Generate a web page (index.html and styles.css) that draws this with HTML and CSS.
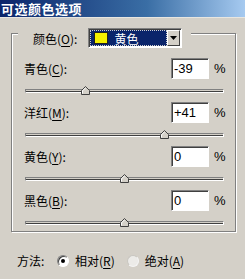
FILE: index.html
```html
<!DOCTYPE html>
<html lang="zh">
<head>
    <meta charset="UTF-8">
    <title>可选颜色选项</title>
    <link rel="stylesheet" href="styles.css">
</head>
<body>

    <div class="titlebar">可选颜色选项</div>

    <div class="group">
        <div class="legend">
            <span>颜色(<u>O</u>):</span>
            <div class="select">
                <div class="select-value">
                    <span class="swatch"></span>
                    <span>黄色</span>
                </div>
                <div class="select-btn">
                    <svg width="7" height="4" viewBox="0 0 7 4"><path d="M0 0h7L3.5 4z" fill="#000"/></svg>
                </div>
            </div>
        </div>

        <div class="row first">
            <span class="label">青色(<u>C</u>):</span>
            <input class="num" type="text" value="-39">
            <span class="pct">%</span>
        </div>
        <div class="track"><span class="thumb" style="left: 30.5%"></span></div>

        <div class="row">
            <span class="label">洋红(<u>M</u>):</span>
            <input class="num" type="text" value="+41">
            <span class="pct">%</span>
        </div>
        <div class="track"><span class="thumb" style="left: 70.5%"></span></div>

        <div class="row">
            <span class="label">黄色(<u>Y</u>):</span>
            <input class="num" type="text" value="0">
            <span class="pct">%</span>
        </div>
        <div class="track"><span class="thumb" style="left: 50%"></span></div>

        <div class="row">
            <span class="label">黑色(<u>B</u>):</span>
            <input class="num" type="text" value="0">
            <span class="pct">%</span>
        </div>
        <div class="track"><span class="thumb" style="left: 50%"></span></div>
    </div>

    <div class="method">
        <span class="method-label">方法:</span>
        <label class="radio"><span class="dot checked"></span>相对(<u>R</u>)</label>
        <label class="radio"><span class="dot off"></span>绝对(<u>A</u>)</label>
    </div>

</body>
</html>
```

FILE: styles.css
```css
body {
    margin: 0;
    width: 245px;
    height: 279px;
    overflow: hidden;
    background-color: #d4d0c8;
    font-family: "Noto Sans CJK SC", "Noto Sans", sans-serif;
    font-size: 12px;
    color: #000;
}
u {
    text-decoration-thickness: 1px;
    text-underline-offset: 2px;
}
.titlebar {
    height: 17px;
    line-height: 17px;
    padding-left: 1px;
    background: linear-gradient(to right, #0a246a 0%, #3a6ea5 60%, #a6caf0 100%);
    color: #fff;
    font-weight: bold;
    font-size: 13px;
    letter-spacing: 0.5px;
    border-bottom: 1px solid #e8e6e0;
}
.group {
    margin: 15px 9px 0 11px;
    padding-bottom: 6px;
    border: 1px solid #808080;
    box-shadow: 1px 1px 0 #fff, inset 1px 1px 0 #fff;
}
.legend {
    display: flex;
    align-items: center;
    gap: 11px;
    width: fit-content;
    margin: -6px 0 0 6px;
    padding: 0 9px 0 15px;
    background-color: #d4d0c8;
    height: 20px;
}
.select {
    display: flex;
    width: 90px;
    height: 16px;
    padding: 1px;
    border: 1px solid;
    border-color: #808080 #fff #fff #808080;
    box-shadow: inset 1px 1px 0 #404040;
    background-color: #fff;
}
.select-value {
    flex: 1;
    display: flex;
    align-items: center;
    gap: 6px;
    padding-left: 4px;
    background-color: #0a246a;
    color: #fff;
    outline: 1px dotted #d0d0d0;
    outline-offset: -1px;
}
.swatch {
    width: 12px;
    height: 10px;
    background-color: #f4f000;
    border: 1px solid #202020;
}
.select-btn {
    width: 13px;
    display: flex;
    align-items: center;
    justify-content: center;
    background-color: #d4d0c8;
    border: 1px solid;
    border-color: #fff #404040 #404040 #fff;
    box-sizing: border-box;
}
.row {
    display: flex;
    align-items: center;
    height: 21px;
    margin-left: 12px;
}
.row.first {
    margin-top: 10px;
}
.label {
    flex: 1;
}
.num {
    width: 38px;
    height: 21px;
    box-sizing: border-box;
    padding: 0 2px;
    margin: 0;
    border: 1px solid;
    border-color: #808080 #fff #fff #808080;
    box-shadow: inset 1px 1px 0 #404040;
    background-color: #fff;
    font-family: "Liberation Sans", Arial, sans-serif;
    font-size: 13px;
    color: #000;
}
.pct {
    width: 14px;
    margin-left: 5px;
    margin-right: 7px;
    font-family: "Liberation Sans", Arial, sans-serif;
    font-size: 13px;
}
.track {
    position: relative;
    height: 2px;
    margin: 10px 11px 9px 13px;
    border: 1px solid;
    border-color: #808080 #fff #fff #808080;
    background-color: #404040;
    box-shadow: 0 1px 0 #d4d0c8 inset;
}
.track:last-child {
    margin-bottom: 0;
}
.thumb {
    position: absolute;
    top: -4px;
    width: 9px;
    height: 9px;
    margin-left: -5px;
    background: url("data:image/svg+xml;utf8,<svg xmlns='http://www.w3.org/2000/svg' width='9' height='9'><path d='M0.5 8.5V4.5L4.5 0.5L8.5 4.5V8.5Z' fill='%23d4d0c8' stroke='%23404040'/><path d='M1.5 7.5V4.9L4.5 1.9' fill='none' stroke='%23fff'/></svg>");
}
.method {
    display: flex;
    align-items: center;
    margin: 20px 0 0 17px;
}
.method-label {
    width: 30px;
    margin-right: 10px;
}
.radio {
    display: flex;
    align-items: center;
    margin-right: 12px;
}
.dot {
    width: 10px;
    height: 10px;
    border-radius: 50%;
    margin-right: 6px;
    border: 1px solid;
    border-color: #808080 #fff #fff #808080;
    box-shadow: inset 1px 1px 0 #404040;
    background-color: #fff;
    position: relative;
}
.dot.checked::after {
    content: "";
    position: absolute;
    left: 3px;
    top: 3px;
    width: 4px;
    height: 4px;
    border-radius: 50%;
    background-color: #000;
}
.dot.off {
    background-color: #ecebe8;
    border-color: #c8c6c0 #f4f4f4 #f4f4f4 #c8c6c0;
    box-shadow: none;
}
```
